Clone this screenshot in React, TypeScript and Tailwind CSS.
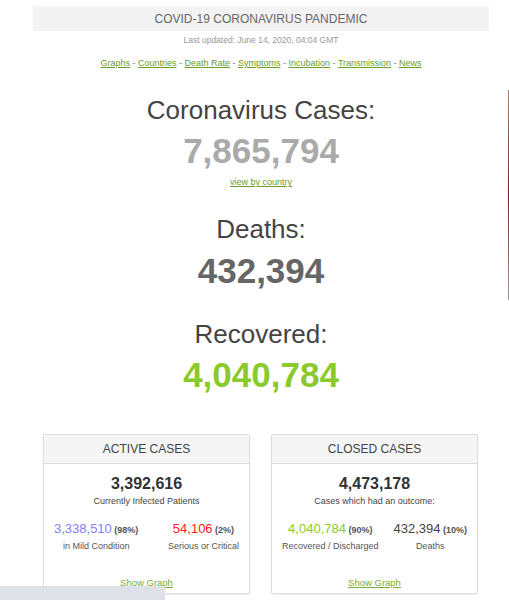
import React from "react";

const navLinks = ["Graphs", "Countries", "Death Rate", "Symptoms", "Incubation", "Transmission", "News"];

type Stat = { value: string; pct: string; label: string; color: string };

const cards: { title: string; total: string; caption: string; left: Stat; right: Stat }[] = [
  {
    title: "ACTIVE CASES",
    total: "3,392,616",
    caption: "Currently Infected Patients",
    left: { value: "3,338,510", pct: "(98%)", label: "in Mild Condition", color: "text-[#8080ff]" },
    right: { value: "54,106", pct: "(2%)", label: "Serious or Critical", color: "text-[#ff2020]" },
  },
  {
    title: "CLOSED CASES",
    total: "4,473,178",
    caption: "Cases which had an outcome:",
    left: { value: "4,040,784", pct: "(90%)", label: "Recovered / Discharged", color: "text-[#8aca2b]" },
    right: { value: "432,394", pct: "(10%)", label: "Deaths", color: "text-[#444]" },
  },
];

const StatCol = ({ stat }: { stat: Stat }) => (
  <div className="text-center">
    <div className="leading-[16px] whitespace-nowrap">
      <span className={`text-[13px] ${stat.color}`}>{stat.value}</span>
      <span className="text-[9px] font-bold text-[#555]"> {stat.pct}</span>
    </div>
    <div className="mt-[1.5px] text-[9px] leading-[12px] text-[#555]">{stat.label}</div>
  </div>
);

const App: React.FC = () => {
  return (
    <div className="relative min-h-[600px] overflow-hidden bg-white font-['Liberation_Sans',Arial,sans-serif]">
      <div className="ml-[33px] w-[456px] pt-[6px] text-center">
        <div className="flex h-[25px] items-center justify-center bg-[#f3f3f3] text-[12px] text-[#666]">
          COVID-19 CORONAVIRUS PANDEMIC
        </div>
        <div className="mt-[3px] text-[8.5px] leading-[12px] text-[#999]">Last updated: June 14, 2020, 04:04 GMT</div>
        <div className="mt-[11px] text-[9px] leading-[12px] text-[#777]">
          {navLinks.map((link, i) => (
            <span key={link}>
              {i > 0 && " - "}
              <a href="#" className="text-[#6c9c2c] underline">
                {link}
              </a>
            </span>
          ))}
        </div>

        <h1 className="mt-[26px] text-[26px] leading-[30px] text-[#444]">Coronavirus Cases:</h1>
        <div className="mt-[6px] text-[35px] font-bold leading-[40px] text-[#aaa]">7,865,794</div>
        <div className="mt-[5px] text-[9px] leading-[12px]">
          <a href="#" className="text-[#6c9c2c] underline">
            view by country
          </a>
        </div>

        <h1 className="mt-[26px] text-[26px] leading-[30px] text-[#444]">Deaths:</h1>
        <div className="mt-[7px] text-[35px] font-bold leading-[40px] text-[#666]">432,394</div>

        <h1 className="mt-[28px] text-[26px] leading-[30px] text-[#444]">Recovered:</h1>
        <div className="mt-[6px] text-[35px] font-bold leading-[40px] text-[#8aca2b]">4,040,784</div>

        <div className="mt-[39px] flex gap-[21px] px-[10px]">
          {cards.map((card) => (
            <div key={card.title} className="w-[207px] rounded-[2px] border border-[#ddd] bg-white shadow-[0_1px_2px_rgba(0,0,0,0.08)]">
              <div className="flex h-[29px] items-center justify-center border-b border-[#ddd] bg-[#f5f5f5] text-[12px] text-[#444]">
                {card.title}
              </div>
              <div className="pt-[10px] pb-[4px]">
                <div className="text-[16px] font-bold leading-[20px] text-[#333]">{card.total}</div>
                <div className="mt-[0.5px] text-[9px] leading-[12px] text-[#444]">{card.caption}</div>
                <div className="mt-[13.5px] flex justify-between px-[10px]">
                  <StatCol stat={card.left} />
                  <StatCol stat={card.right} />
                </div>
                <div className="mt-[25.5px] text-[9.5px] leading-[12px]">
                  <a href="#" className="text-[#7aab3a] underline">
                    Show Graph
                  </a>
                </div>
              </div>
            </div>
          ))}
        </div>
      </div>

      {/* thin edge strip on the right */}
      <div className="absolute right-0 top-[90px] h-[210px] w-px bg-gradient-to-b from-[#a08070] via-[#801030] to-[#999]" />
      {/* status bar in the lower-left corner */}
      <div className="absolute left-0 top-[586px] h-[14px] w-[165px] bg-[#dee1e6]" />
    </div>
  );
};

export default App;
